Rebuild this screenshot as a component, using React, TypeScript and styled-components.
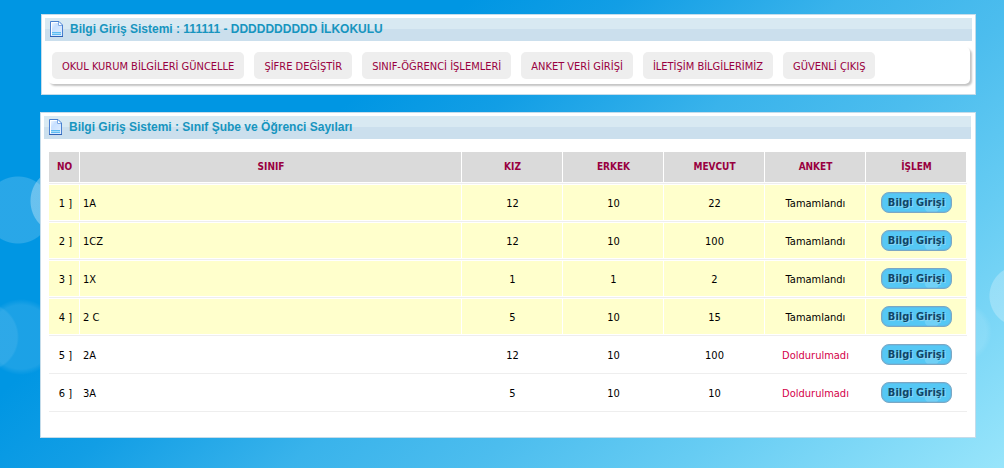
import React from "react";
import styled, { createGlobalStyle, css } from "styled-components";

const GlobalStyle = createGlobalStyle`
  * { box-sizing: border-box; }
  html { min-height: 100%; background: #0096e3; }
  body {
    margin: 0;
    min-height: 100vh;
    font-family: "DejaVu Sans Condensed", "DejaVu Sans", sans-serif;
    font-size: 11px;
    line-height: 14px;
    color: #000;
    background:
      radial-gradient(circle at 64px 201px, rgba(255,255,255,.3) 33px, transparent 34px),
      radial-gradient(circle at 18px 210px, rgba(255,255,255,.16) 33px, transparent 34px),
      radial-gradient(circle at -16px 337px, rgba(255,255,255,.08) 33px, transparent 35px),
      radial-gradient(circle at 21px 337px, rgba(255,255,255,.11) 32px, transparent 38px),
      radial-gradient(circle at calc(100% + 16px) 296px, rgba(255,255,255,.25) 30px, transparent 31px),
      radial-gradient(circle at calc(100% - 42px) 332px, rgba(255,255,255,.1) 24px, transparent 30px),
      linear-gradient(140deg, #0096e3 30%, #129ee5 40%, #39b3eb 54%, #4cbdee 66%, #66ccf3 79%, #98e5fb 100%);
  }
`;

const Page = styled.main`
  display: flex;
  flex-direction: column;
  gap: 17px;
  padding: 14px 28px 30px 40px;
`;

const Panel = styled.section<{ $inset?: boolean }>`
  margin-left: ${(p) => (p.$inset ? "1px" : "0")};
  padding: ${(p) => (p.$inset ? "3px" : "3px 4px 3px 3px")};
  border: 1px solid #c5dcea;
  background: #fff;
`;

const TitleBar = styled.header`
  display: flex;
  align-items: center;
  gap: 6px;
  height: 23px;
  padding-left: 4px;
  background: linear-gradient(#d8e9f2 11px, #cbdfed 11px);
`;

const Title = styled.h1`
  margin: 0;
  padding-bottom: 1px;
  font: bold 12px/16px "Liberation Sans", Arial, sans-serif;
  color: #1795bf;
`;

const Nav = styled.nav`
  display: flex;
  flex-wrap: wrap;
  gap: 10px;
  margin: 6px 2px 7px 3px;
  padding: 5px 4px;
  border-radius: 5px;
  box-shadow: 2px 2px 2px #c4c4c4;
`;

const NavLink = styled.a`
  padding: 8px 10px 5px;
  border-radius: 5px;
  background: #eee;
  color: #990040;
  text-decoration: none;
  white-space: nowrap;
`;

const Table = styled.table`
  width: calc(100% - 9px);
  margin: 13px 4px 22px 5px;
  border-spacing: 0;
  table-layout: fixed;
`;

const cell = css`
  border-bottom: 1px solid #eee;
`;

const HeadCell = styled.th<{ $width?: number }>`
  ${cell}
  width: ${(p) => (p.$width ? `${p.$width}px` : "auto")};
  height: 32px;
  padding: 0 0 2px;
  background: #dadada;
  box-shadow: inset -1px -1px #fff;
  color: #990040;
  font-size: 10px;
`;

const Cell = styled.td<{ $kind?: "number" | "name" | "action"; $done: boolean }>`
  ${cell}
  height: 38px;
  padding: ${(p) =>
    p.$kind === "number" ? "2px 8px 0 0" : p.$kind === "action" ? "0" : "2px 3px 0"};
  text-align: ${(p) =>
    p.$kind === "number" ? "right" : p.$kind === "name" ? "left" : "center"};
  background: ${(p) => (p.$done ? "#ffffcc" : "#fff")};
  box-shadow: inset -1px -1px #fff, inset 0 1px #fff;
`;

const Status = styled.span<{ $done: boolean }>`
  color: ${(p) => (p.$done ? "#000" : "#d4004a")};
`;

const EntryButton = styled.button`
  display: block;
  height: 21px;
  margin: 0 auto;
  padding: 1px 6px 0;
  border: 1px solid #7ba7c4;
  border-radius: 8px;
  background: radial-gradient(circle at 50px 13px, #70d1f7 7px, transparent 8px), #55c8f5;
  box-shadow: inset 0 0 0 1px rgba(110, 170, 210, 0.35);
  color: #0f4467;
  font: bold 11px/18px "DejaVu Sans Condensed", "DejaVu Sans", sans-serif;
  text-shadow: 1px 1px #8ad6f3;
  white-space: nowrap;
`;

const PageIcon = () => (
  <svg width="15" height="17" viewBox="0 0 15 17" aria-hidden="true">
    <defs>
      <linearGradient id="sheet" x1="0" y1="0" x2="1" y2="1">
        <stop offset="0" stopColor="#fff" />
        <stop offset=".35" stopColor="#c8e0ff" />
        <stop offset="1" stopColor="#e2efff" />
      </linearGradient>
    </defs>
    <path d="M1.500 .5H10L13.500 4V15.500H1.500Z" fill="url(#sheet)" stroke="#4a80cf" />
    <path d="M2.500 14.500V1.500H9" fill="none" stroke="#fff" />
    <path d="M9.500 1V4.500H13" fill="#fff" stroke="#7fabe6" />
    <rect x="3" y="11" width="9" height="3" fill="#5dbcf2" />
    <path d="M3 12.500H12" stroke="#a5dcfa" />
    <path d="M1 15.500H14" stroke="#2f62b5" />
  </svg>
);

const links = [
  "OKUL KURUM BİLGİLERİ GÜNCELLE",
  "ŞİFRE DEĞİŞTİR",
  "SINIF-ÖĞRENCİ İŞLEMLERİ",
  "ANKET VERİ GİRİŞİ",
  "İLETİŞİM BİLGİLERİMİZ",
  "GÜVENLİ ÇIKIŞ",
];

const rows = [
  { name: "1A", girls: 12, boys: 10, total: 22, done: true },
  { name: "1CZ", girls: 12, boys: 10, total: 100, done: true },
  { name: "1X", girls: 1, boys: 1, total: 2, done: true },
  { name: "2 C", girls: 5, boys: 10, total: 15, done: true },
  { name: "2A", girls: 12, boys: 10, total: 100, done: false },
  { name: "3A", girls: 5, boys: 10, total: 10, done: false },
];

export default function App() {
  return (
    <>
      <GlobalStyle />
      <Page>
        <Panel $inset>
          <TitleBar>
            <PageIcon />
            <Title>Bilgi Giriş Sistemi : 111111 - DDDDDDDDDD İLKOKULU</Title>
          </TitleBar>
          <Nav>
            {links.map((label) => (
              <NavLink href="#" key={label}>{label}</NavLink>
            ))}
          </Nav>
        </Panel>
        <Panel>
          <TitleBar>
            <PageIcon />
            <Title as="h2">Bilgi Giriş Sistemi : Sınıf Şube ve Öğrenci Sayıları</Title>
          </TitleBar>
          <Table>
            <thead>
              <tr>
                <HeadCell $width={31}>NO</HeadCell>
                <HeadCell>SINIF</HeadCell>
                {["KIZ", "ERKEK", "MEVCUT", "ANKET", "İŞLEM"].map((label) => (
                  <HeadCell $width={101} key={label}>{label}</HeadCell>
                ))}
              </tr>
            </thead>
            <tbody>
              {rows.map((row, i) => (
                <tr key={row.name}>
                  <Cell $done={row.done} $kind="number">{i + 1} ]</Cell>
                  <Cell $done={row.done} $kind="name">{row.name}</Cell>
                  <Cell $done={row.done}>{row.girls}</Cell>
                  <Cell $done={row.done}>{row.boys}</Cell>
                  <Cell $done={row.done}>{row.total}</Cell>
                  <Cell $done={row.done}>
                    <Status $done={row.done}>{row.done ? "Tamamlandı" : "Doldurulmadı"}</Status>
                  </Cell>
                  <Cell $done={row.done} $kind="action">
                    <EntryButton type="button">Bilgi Girişi</EntryButton>
                  </Cell>
                </tr>
              ))}
            </tbody>
          </Table>
        </Panel>
      </Page>
    </>
  );
}
